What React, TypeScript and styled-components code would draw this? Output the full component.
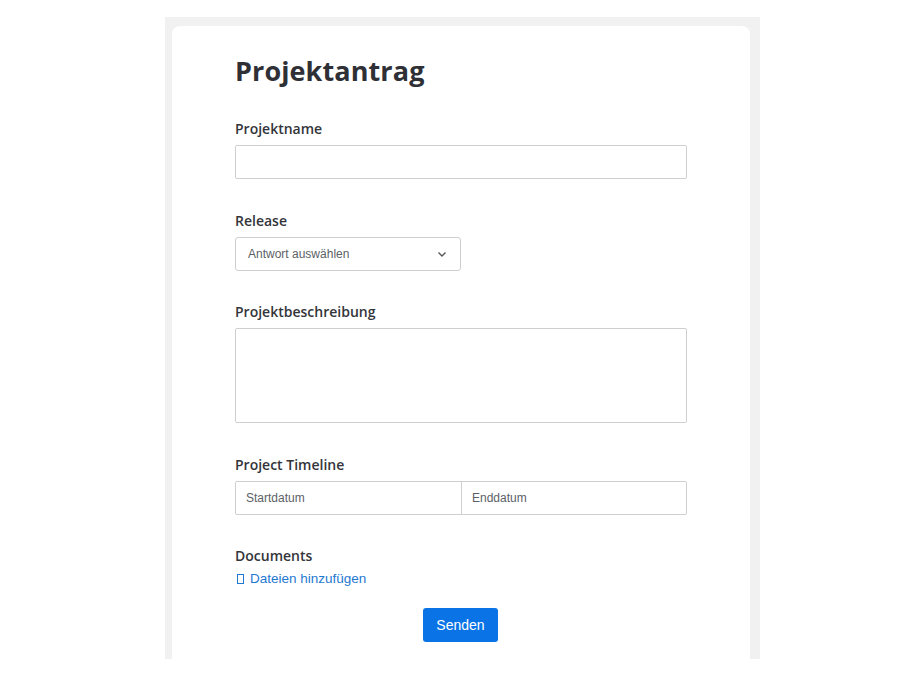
import React from "react";
import styled, { createGlobalStyle } from "styled-components";

const Global = createGlobalStyle`
  html, body { margin: 0; padding: 0; background: #ffffff; }
  * { box-sizing: border-box; }
`;

const Page = styled.div`
  padding-top: 17px;
  padding-left: 165px;
`;

const Frame = styled.div`
  width: 595px;
  height: 642px;
  background: #f1f1f1;
  padding: 9px 10px 0 7px;
  overflow: hidden;
`;

const Card = styled.form`
  background: #ffffff;
  border-radius: 8px 8px 0 0;
  height: 100%;
  padding: 28px 63px 0 63px;
  display: flex;
  flex-direction: column;
`;

const Title = styled.h1`
  margin: 0 0 31px 0;
  font-family: "Open Sans", sans-serif;
  font-weight: 700;
  font-size: 27px;
  line-height: 34px;
  color: #2e3036;
  letter-spacing: 0.1px;
`;

const Field = styled.div<{ $gap: number }>`
  display: flex;
  flex-direction: column;
  margin-bottom: ${(p) => p.$gap}px;
`;

const Label = styled.label`
  font-family: "Open Sans", sans-serif;
  font-weight: 600;
  font-size: 14px;
  line-height: 20px;
  color: #33353a;
  margin-bottom: 6px;
`;

const TextInput = styled.div<{ $h: number }>`
  width: 100%;
  height: ${(p) => p.$h}px;
  border: 1px solid #cfcfd2;
  border-radius: 2px;
  background: #fff;
`;

const SelectBox = styled.div`
  width: 226px;
  height: 34px;
  border: 1px solid #cfcfd2;
  border-radius: 3px;
  display: flex;
  align-items: center;
  justify-content: space-between;
  padding: 0 13px 0 12px;
  font-family: "Liberation Sans", Arial, sans-serif;
  font-size: 12px;
  color: #5c5f66;
`;

const DateRow = styled.div`
  display: grid;
  grid-template-columns: 1fr 1fr;
  height: 34px;
  border: 1px solid #cfcfd2;
  border-radius: 2px;
`;

const DateCell = styled.div<{ $divider?: boolean }>`
  display: flex;
  align-items: center;
  padding-left: 10px;
  font-family: "Liberation Sans", Arial, sans-serif;
  font-size: 12px;
  color: #5c5f66;
  border-left: ${(p) => (p.$divider ? "1px solid #cfcfd2" : "none")};
`;

const AddLink = styled.a`
  display: inline-flex;
  align-items: center;
  gap: 6px;
  font-family: "Liberation Sans", Arial, sans-serif;
  font-size: 13.5px;
  color: #1f78d1;
  text-decoration: none;
  margin-top: -1px;
`;

const Tofu = styled.span`
  display: inline-block;
  width: 7px;
  height: 10px;
  border: 1px solid #1f78d1;
  margin-left: 2px;
  margin-top: 1px;
`;

const ButtonRow = styled.div`
  display: flex;
  justify-content: center;
  margin-top: 22px;
  padding-right: 1px;
`;

const Button = styled.button`
  width: 75px;
  height: 34px;
  border: none;
  border-radius: 3px;
  background: #0a74e6;
  color: #ffffff;
  font-family: "Liberation Sans", Arial, sans-serif;
  font-size: 14px;
  cursor: pointer;
`;

const Chevron = () => (
  <svg width="10" height="7" viewBox="0 0 10 7" fill="none">
    <path d="M1.5 1.5 L5 5 L8.5 1.5" stroke="#555" strokeWidth="1.4" />
  </svg>
);

export default function App() {
  return (
    <>
      <Global />
      <Page>
        <Frame>
          <Card onSubmit={(e) => e.preventDefault()}>
            <Title>Projektantrag</Title>
            <Field $gap={32}>
              <Label>Projektname</Label>
              <TextInput $h={34} />
            </Field>
            <Field $gap={31}>
              <Label>Release</Label>
              <SelectBox>
                <span>Antwort auswählen</span>
                <Chevron />
              </SelectBox>
            </Field>
            <Field $gap={32}>
              <Label>Projektbeschreibung</Label>
              <TextInput $h={95} />
            </Field>
            <Field $gap={31}>
              <Label>Project Timeline</Label>
              <DateRow>
                <DateCell>Startdatum</DateCell>
                <DateCell $divider>Enddatum</DateCell>
              </DateRow>
            </Field>
            <Field $gap={0}>
              <Label>Documents</Label>
              <AddLink href="#">
                <Tofu />
                Dateien hinzufügen
              </AddLink>
            </Field>
            <ButtonRow>
              <Button type="submit">Senden</Button>
            </ButtonRow>
          </Card>
        </Frame>
      </Page>
    </>
  );
}
